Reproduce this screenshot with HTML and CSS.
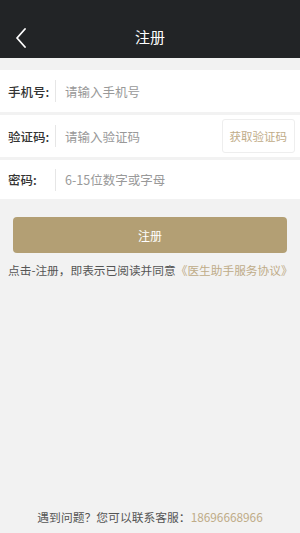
FILE: index.html
```html
<!DOCTYPE html>
<html lang="zh-CN">
<head>
    <meta charset="UTF-8">
    <meta name="viewport" content="width=device-width, initial-scale=1.0">
    <title>注册</title>
    <link rel="stylesheet" href="styles.css">
</head>
<body>
    <div class="page">
        <div class="header">
            <span class="back">
                <svg width="12" height="20" viewBox="0 0 12 20">
                    <path d="M10 1 L2 10 L10 19" fill="none" stroke="#fff" stroke-width="1.8" stroke-linecap="round" stroke-linejoin="round"/>
                </svg>
            </span>
            <span class="title">注册</span>
        </div>

        <div class="form">
            <div class="row">
                <span class="label">手机号:</span>
                <span class="line"></span>
                <span class="holder">请输入手机号</span>
            </div>
            <div class="row">
                <span class="label">验证码:</span>
                <span class="line"></span>
                <span class="holder">请输入验证码</span>
                <span class="code">获取验证码</span>
            </div>
            <div class="row short">
                <span class="label">密码:</span>
                <span class="line"></span>
                <span class="holder">6-15位数字或字母</span>
            </div>
        </div>

        <div class="submit">注册</div>
        <p class="agree">点击-注册，即表示已阅读并同意<span class="gold">《医生助手服务协议》</span></p>

        <p class="help">遇到问题？您可以联系客服：<span class="gold">18696668966</span></p>
    </div>
</body>
</html>
```

FILE: styles.css
```css
html, body {
    margin: 0;
    padding: 0;
    background: #f2f2f2;
    font-family: "Noto Sans CJK SC", "Noto Sans", sans-serif;
}
.page {
    display: flex;
    flex-direction: column;
    min-height: 533px;
}
.header {
    height: 58px;
    background: #222426;
    display: flex;
    align-items: center;
    justify-content: center;
    position: relative;
}
.back {
    position: absolute;
    left: 15px;
    top: 28px;
    display: flex;
}
.title {
    color: #fff;
    font-size: 15px;
    margin-top: 15px;
}
.form {
    margin-top: 12px;
    display: flex;
    flex-direction: column;
    gap: 3px;
}
.row {
    height: 42px;
    background: #fff;
    display: flex;
    align-items: center;
    font-size: 12.5px;
}
.row.short {
    height: 39px;
}
.label {
    width: 47px;
    padding-left: 8px;
    color: #333;
    font-weight: 500;
}
.line {
    width: 1px;
    height: 22px;
    background: #e6e6e6;
}
.holder {
    flex: 1;
    padding-left: 9px;
    color: #999;
}
.code {
    margin-right: 5px;
    height: 32px;
    padding: 0 7px;
    border: 1px solid #eeeeee;
    border-radius: 3px;
    display: flex;
    align-items: center;
    color: #bfac88;
    font-size: 11.5px;
}
.submit {
    margin: 18px 13px 0;
    height: 36px;
    border-radius: 4px;
    background: #b39f74;
    color: #fff;
    font-size: 12px;
    display: flex;
    align-items: center;
    justify-content: center;
}
.agree {
    margin: 8px 0 0 8px;
    font-size: 11.7px;
    color: #555;
    white-space: nowrap;
}
.gold {
    color: #bfac88;
}
.help {
    margin: auto 0 8px;
    text-align: center;
    font-size: 11.8px;
    color: #555;
}
```
